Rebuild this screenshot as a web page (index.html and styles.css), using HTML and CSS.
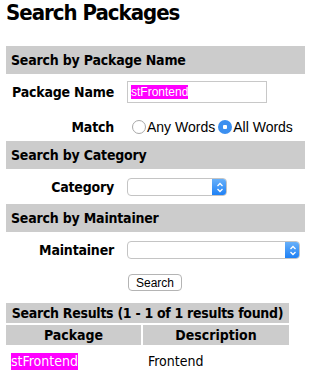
FILE: index.html
```html
<!DOCTYPE html>
<html lang="en">
<head>
    <meta charset="UTF-8">
    <meta name="viewport" content="width=device-width, initial-scale=1.0">
    <title>Search Packages</title>
    <link rel="stylesheet" href="styles.css">
</head>
<body>
    <header>
        <h1>Search Packages</h1>
    </header>
    <section class="bar">Search by Package Name</section>
    <div class="row row-name">
        <label class="label">Package Name</label>
        <div class="input"><span class="hl">stFrontend</span></div>
    </div>
    <div class="row row-match">
        <label class="label">Match</label>
        <div class="radios">
            <span class="radio"></span><span class="opt">Any Words</span>
            <span class="radio checked"></span><span class="opt">All Words</span>
        </div>
    </div>
    <section class="bar">Search by Category</section>
    <div class="row row-select">
        <label class="label">Category</label>
        <div class="select short">
            <span class="arrow">
                <svg width="8" height="11" viewBox="0 0 8 11"><path d="M1.5 4 L4 1.5 L6.5 4 M1.5 7 L4 9.5 L6.5 7" fill="none" stroke="#fff" stroke-width="1.3"/></svg>
            </span>
        </div>
    </div>
    <section class="bar">Search by Maintainer</section>
    <div class="row row-select">
        <label class="label">Maintainer</label>
        <div class="select long">
            <span class="arrow">
                <svg width="8" height="11" viewBox="0 0 8 11"><path d="M1.5 4 L4 1.5 L6.5 4 M1.5 7 L4 9.5 L6.5 7" fill="none" stroke="#fff" stroke-width="1.3"/></svg>
            </span>
        </div>
    </div>
    <div class="row row-button">
        <span></span>
        <button>Search</button>
    </div>
    <section class="results">
        <div class="caption">Search Results (1 - 1 of 1 results found)</div>
        <div class="cols">
            <div class="th">Package</div>
            <div class="th">Description</div>
        </div>
        <div class="cols data">
            <div class="td"><span class="hl">stFrontend</span></div>
            <div class="td desc">Frontend</div>
        </div>
    </section>
</body>
</html>
```
FILE: styles.css
```css
* {
    margin: 0;
    padding: 0;
    box-sizing: border-box;
}
body {
    font-family: "DejaVu Sans Condensed", "DejaVu Sans", sans-serif;
    font-size: 14px;
    color: #000;
    background: #fff;
    margin: 0 5px 0 6px;
}
header {
    height: 46px;
}
h1 {
    font-size: 22px;
    line-height: 26px;
    letter-spacing: -1px;
}
.bar {
    background-color: #cccccc;
    font-weight: bold;
    height: 28px;
    line-height: 28px;
    padding-left: 5px;
    letter-spacing: -0.2px;
}
.row {
    display: grid;
    grid-template-columns: 121px 1fr;
    align-items: center;
}
.label {
    font-weight: bold;
    text-align: right;
    padding-right: 13px;
    letter-spacing: -0.2px;
}
.row-name {
    margin-top: 7px;
    height: 22px;
}
.input {
    width: 140px;
    height: 22px;
    border: 1px solid #c8c8c8;
    padding: 3px 3px;
    font-family: "Liberation Sans", Arial, sans-serif;
    font-size: 12px;
    line-height: 14px;
}
.hl {
    background: #f0f;
    color: #fff;
}
.row-match {
    margin-top: 16px;
    height: 16px;
    margin-bottom: 6px;
}
.radios {
    display: flex;
    align-items: center;
    font-family: "Liberation Sans", Arial, sans-serif;
    font-size: 14px;
    padding-left: 5px;
}
.radio {
    width: 14px;
    height: 14px;
    border-radius: 50%;
    border: 1px solid #a8a8a8;
    background: #fff;
    margin-right: 1px;
}
.radio.checked {
    border: none;
    background: radial-gradient(circle, #fff 0 2px, #3b8ff0 2.5px);
    margin-left: 3px;
}
.row-select {
    margin-top: 9px;
    height: 18px;
    margin-bottom: 8px;
}
.select {
    height: 18px;
    border: 1px solid #c4c4c4;
    border-radius: 4px;
    background: #fff;
    display: flex;
    justify-content: flex-end;
    overflow: hidden;
}
.select.short {
    width: 100px;
}
.select.long {
    width: 173px;
}
.arrow {
    width: 15px;
    margin: -1px -1px -1px 0;
    background: linear-gradient(#6cb3fa, #1a7ef5);
    display: flex;
    align-items: center;
    justify-content: center;
}
.row-button {
    margin-top: 15px;
    height: 17px;
}
button {
    width: 54px;
    height: 17px;
    justify-self: start;
    margin-left: 1px;
    background: #fff;
    border: 1px solid #b4b4b4;
    border-radius: 4px;
    font-family: "Liberation Sans", Arial, sans-serif;
    font-size: 12px;
    color: #000;
}
.results {
    margin-top: 12px;
    width: 283px;
}
.caption {
    background: #cccccc;
    font-weight: bold;
    height: 20px;
    line-height: 20px;
    text-align: center;
    letter-spacing: -0.3px;
}
.cols {
    display: grid;
    grid-template-columns: 135px 1fr;
    gap: 2px;
    margin-top: 2px;
}
.th {
    background: #cccccc;
    font-weight: bold;
    height: 20px;
    line-height: 20px;
    text-align: center;
}
.data {
    margin-top: 8px;
}
.td {
    padding-left: 5px;
    line-height: 17px;
    font-size: 14px;
}
.td .hl {
    display: inline-block;
    height: 17px;
}
.desc {
    font-size: 14px;
}
```
